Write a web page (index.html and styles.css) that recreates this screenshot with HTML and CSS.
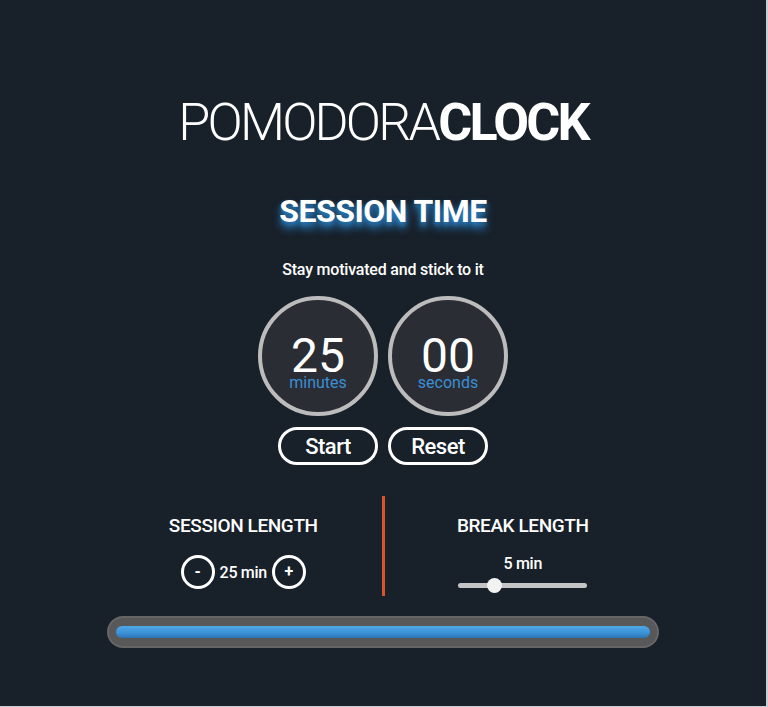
FILE: index.html
```html
<!DOCTYPE html>
<html>
<head>
<meta charset="utf-8">
<link rel="stylesheet" href="styles.css">
</head>
<body>
<main class="app">
  <h1 class="title"><span class="light">POMODORA</span><span class="bold">CLOCK</span></h1>
  <h2 class="mode">SESSION TIME</h2>
  <p class="tagline">Stay motivated and stick to it</p>
  <div class="dials">
    <div class="dial"><span class="num">25</span><span class="unit">minutes</span></div>
    <div class="dial"><span class="num">00</span><span class="unit">seconds</span></div>
  </div>
  <div class="actions">
    <button class="pill">Start</button>
    <button class="pill">Reset</button>
  </div>
  <section class="settings">
    <div class="setting">
      <h3 class="label">SESSION LENGTH</h3>
      <div class="stepper">
        <button class="round">-</button>
        <span class="val">25 min</span>
        <button class="round">+</button>
      </div>
    </div>
    <div class="divider"></div>
    <div class="setting">
      <h3 class="label">BREAK LENGTH</h3>
      <div class="slider-wrap">
        <span class="val small">5 min</span>
        <div class="slider"><div class="thumb" style="left: 28%"></div></div>
      </div>
    </div>
  </section>
  <div class="progress"><div class="fill" style="width: 100%"></div></div>
</main>
</body>
</html>
```
FILE: styles.css
```css
html, body { margin: 0; padding: 0; }
body {
  background: #c9ced3;
  font-family: Roboto, "Liberation Sans", sans-serif;
  color: #fff;
}
.app {
  width: 766px;
  height: 706px;
  background: #182029;
  display: flex;
  flex-direction: column;
  align-items: center;
  box-sizing: border-box;
  padding-top: 96px;
}
.title {
  margin: 0;
  font-size: 52px;
  line-height: 54px;
  letter-spacing: -2.8px;
  font-weight: 300;
}
.title .light { font-weight: 300; }
.title .bold { font-weight: 700; }
.mode {
  margin: 43px 0 0;
  font-size: 32px;
  line-height: 36px;
  font-weight: 700;
  letter-spacing: -0.5px;
  text-shadow: 0 6px 8px #2d8fdc, 0 3px 4px rgba(45,143,220,0.6);
}
.tagline {
  margin: 32px 0 0;
  font-size: 16px;
  line-height: 18px;
  font-weight: 500;
  letter-spacing: -0.2px;
}
.dials {
  display: flex;
  gap: 10px;
  margin-top: 17px;
}
.dial {
  width: 120px;
  height: 120px;
  box-sizing: border-box;
  border: 4px solid #bcbcbc;
  border-radius: 50%;
  background: #2a2d33;
  display: flex;
  flex-direction: column;
  align-items: center;
  padding-top: 38px;
}
.num {
  font-size: 48px;
  line-height: 36px;
}
.unit {
  font-size: 16px;
  line-height: 16px;
  margin-top: 1px;
  color: #3b8fd6;
}
.actions {
  display: flex;
  gap: 10px;
  margin-top: 11px;
}
.pill {
  width: 100px;
  height: 38px;
  box-sizing: border-box;
  border: 3px solid #fff;
  border-radius: 19px;
  background: transparent;
  color: #fff;
  font-family: Roboto, "Liberation Sans", sans-serif;
  font-size: 22px;
  font-weight: 500;
  padding: 0;
  letter-spacing: -0.5px;
}
.settings {
  display: flex;
  width: 556px;
  margin-top: 31px;
  height: 100px;
}
.setting {
  flex: 1;
  display: flex;
  flex-direction: column;
  align-items: center;
}
.label {
  margin: 20px 0 0;
  font-size: 19px;
  line-height: 20px;
  font-weight: 500;
  letter-spacing: -0.4px;
}
.divider {
  width: 3px;
  background: #d9542e;
}
.stepper {
  display: flex;
  align-items: center;
  gap: 5px;
  margin-top: 19px;
}
.round {
  width: 34px;
  height: 34px;
  box-sizing: border-box;
  border: 3px solid #fff;
  border-radius: 50%;
  background: transparent;
  color: #fff;
  font-family: Roboto, "Liberation Sans", sans-serif;
  font-size: 16px;
  font-weight: 700;
  padding: 0 0 2px;
}
.val {
  font-size: 16px;
  font-weight: 500;
  letter-spacing: -0.3px;
}
.slider-wrap {
  display: flex;
  flex-direction: column;
  align-items: center;
  margin-top: 18px;
}
.slider {
  position: relative;
  width: 129px;
  height: 5px;
  border-radius: 3px;
  background: #c4c4c4;
  margin-top: 10px;
}
.thumb {
  position: absolute;
  top: -5px;
  width: 15px;
  height: 15px;
  margin-left: -7px;
  border-radius: 50%;
  background: #f2f2f2;
}
.progress {
  width: 552px;
  height: 32px;
  box-sizing: border-box;
  margin-top: 20px;
  border-radius: 16px;
  background: #585858;
  border: 2px solid #666;
  padding: 8px 7px;
}
.fill {
  height: 12px;
  border-radius: 6px;
  background: linear-gradient(#4ea8e6, #3a90d6 60%, #2c73b3);
}
```
